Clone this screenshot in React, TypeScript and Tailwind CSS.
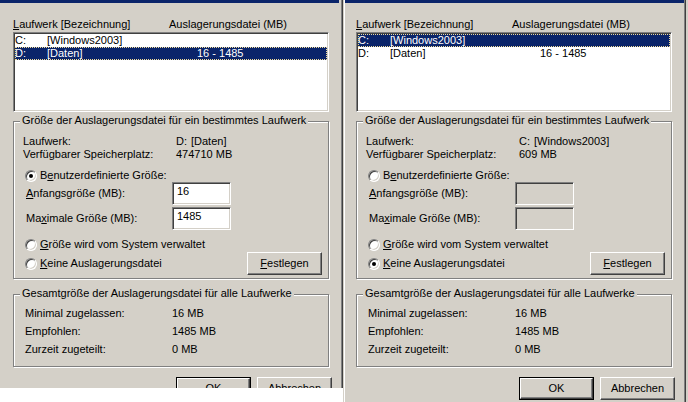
import React from 'react';

type Drive = 'C' | 'D';

const SUNKEN =
  'border border-t-[#808080] border-l-[#808080] border-b-white border-r-white shadow-[inset_1px_1px_0_#404040,inset_-1px_-1px_0_#d4d0c8]';

function U({ children }: { children: React.ReactNode }) {
  return <span className="underline decoration-1 underline-offset-[1px]">{children}</span>;
}

function Radio({ checked }: { checked?: boolean }) {
  return (
    <span className="inline-flex h-[12px] w-[12px] shrink-0 items-center justify-center rounded-full border border-t-[#808080] border-l-[#808080] border-b-white border-r-white bg-white shadow-[inset_1px_1px_0_#404040,inset_-1px_-1px_0_#d4d0c8]">
      {checked && <span className="h-[4px] w-[4px] rounded-full bg-black" />}
    </span>
  );
}

function Btn({ children, isDefault }: { children: React.ReactNode; isDefault?: boolean }) {
  const face = (
    <div className="flex h-full w-full items-center justify-center border border-t-white border-l-white border-b-[#404040] border-r-[#404040] shadow-[inset_-1px_-1px_0_#808080]">
      {children}
    </div>
  );
  return (
    <div className={isDefault ? 'h-[23px] w-[75px] shrink-0 border border-black' : 'h-[23px] w-[75px] shrink-0'}>
      {face}
    </div>
  );
}

function Group({ label, className, children }: { label: string; className: string; children: React.ReactNode }) {
  return (
    <div className={`relative w-[316px] border border-[#808080] shadow-[1px_1px_0_#fff,inset_1px_1px_0_#fff] ${className}`}>
      <span className="absolute left-[6px] top-[-8px] bg-[#d4d0c8] px-[2px] leading-[13px]">{label}</span>
      {children}
    </div>
  );
}

function ListRow({ drive, label, size, selected }: { drive: string; label: string; size: string; selected: boolean }) {
  return (
    <div
      className={
        selected
          ? 'flex h-[13px] items-center bg-[#0a246a] text-white outline-1 outline-dotted -outline-offset-1 outline-[#f0dc9a]'
          : 'flex h-[13px] items-center'
      }
    >
      <span className="w-[32px] shrink-0">{drive}</span>
      <span className="w-[150px] shrink-0">{label}</span>
      <span>{size}</span>
    </div>
  );
}

function Field({ value, disabled }: { value: string; disabled: boolean }) {
  return (
    <div className={`h-[23px] w-[59px] shrink-0 pl-[4px] pt-[2px] ${SUNKEN} ${disabled ? 'bg-[#d4d0c8]' : 'bg-white'}`}>
      {value}
    </div>
  );
}

function Dialog({ sel, first }: { sel: Drive; first?: boolean }) {
  const isD = sel === 'D';
  const body = (
    <div className={first ? 'h-full border-r border-r-[#808080]' : 'h-full border-l border-r border-l-white border-r-[#808080]'}>
      <div className={first ? 'mr-[2px] h-[3px] bg-[#0a246a]' : 'h-[3px] bg-[#0a246a]'} />
      <div className={first ? 'pl-[13px]' : 'pl-[11px]'}>
        {/* Laufwerksliste */}
        <div className="mt-[15px] flex h-[13px]">
          <span className="w-[156px]">
            <U>L</U>aufwerk [Bezeichnung]
          </span>
          <span>Auslagerungsdatei (MB)</span>
        </div>
        <div className={`mt-[1px] h-[80px] w-[316px] bg-white ${SUNKEN} p-[1px]`}>
          <ListRow drive="C:" label="[Windows2003]" size="" selected={!isD} />
          <ListRow drive="D:" label="[Daten]" size="16 - 1485" selected={isD} />
        </div>

        <Group label="Größe der Auslagerungsdatei für ein bestimmtes Laufwerk" className="mt-[9px] h-[158px]">
          <div className="mt-[13px] flex h-[13px] pl-[9px]">
            <span className="w-[153px] shrink-0">Laufwerk:</span>
            <span className="w-[15px] shrink-0">{isD ? 'D:' : 'C:'}</span>
            <span>{isD ? '[Daten]' : '[Windows2003]'}</span>
          </div>
          <div className="flex h-[13px] pl-[9px]">
            <span className="w-[153px] shrink-0">Verfügbarer Speicherplatz:</span>
            <span>{isD ? '474710 MB' : '609 MB'}</span>
          </div>
          <div className="mt-[8px] flex h-[13px] items-center gap-[3px] pl-[11px]">
            <Radio checked={isD} />
            <span>
              B<U>e</U>nutzerdefinierte Größe:
            </span>
          </div>
          <div className="flex h-[23px] items-center pl-[12px]">
            <span className="w-[146px] shrink-0">
              <U>A</U>nfangsgröße (MB):
            </span>
            <Field value={isD ? '16' : ''} disabled={!isD} />
          </div>
          <div className="mt-[2px] flex h-[23px] items-center pl-[12px]">
            <span className="w-[146px] shrink-0">
              Ma<U>x</U>imale Größe (MB):
            </span>
            <Field value={isD ? '1485' : ''} disabled={!isD} />
          </div>
          <div className="mt-[8px] flex h-[13px] items-center gap-[3px] pl-[11px]">
            <Radio />
            <span>
              <U>G</U>röße wird vom System verwaltet
            </span>
          </div>
          <div className="mt-[1px] flex h-[23px] items-center pl-[11px] pr-[6px]">
            <div className="flex flex-1 items-center gap-[3px]">
              <Radio checked={!isD} />
              <span>
                <U>K</U>eine Auslagerungsdatei
              </span>
            </div>
            <Btn>
              <span>
                <U>F</U>estlegen
              </span>
            </Btn>
          </div>
        </Group>

        <Group label="Gesamtgröße der Auslagerungsdatei für alle Laufwerke" className="mt-[15px] h-[73px]">
          <div className="mt-[12px] flex h-[13px] pl-[11px]">
            <span className="w-[147px] shrink-0">Minimal zugelassen:</span>
            <span>16 MB</span>
          </div>
          <div className="mt-[5px] flex h-[13px] pl-[11px]">
            <span className="w-[147px] shrink-0">Empfohlen:</span>
            <span>1485 MB</span>
          </div>
          <div className="mt-[5px] flex h-[13px] pl-[11px]">
            <span className="w-[147px] shrink-0">Zurzeit zugeteilt:</span>
            <span>0 MB</span>
          </div>
        </Group>

        <div className="mt-[10px] flex gap-[6px] pl-[163px]">
          <Btn isDefault>OK</Btn>
          <Btn>Abbrechen</Btn>
        </div>
      </div>
    </div>
  );

  return (
    <div
      className={
        first
          ? 'h-[388px] w-[343px] shrink-0 overflow-hidden border-r border-r-[#404040] bg-[#d4d0c8]'
          : 'h-[402px] w-[343px] shrink-0 overflow-hidden border-l border-r border-l-[#d4d0c8] border-r-[#404040] bg-[#d4d0c8]'
      }
    >
      {body}
    </div>
  );
}

export default function App() {
  return (
    <div className="flex h-[402px] w-[688px] overflow-hidden bg-white font-['Liberation_Sans',Arial,sans-serif] text-[11px] leading-[13px] text-black">
      <Dialog sel="D" first />
      <Dialog sel="C" />
      <div className="h-full w-[2px] bg-[#d4d0c8]" />
    </div>
  );
}
